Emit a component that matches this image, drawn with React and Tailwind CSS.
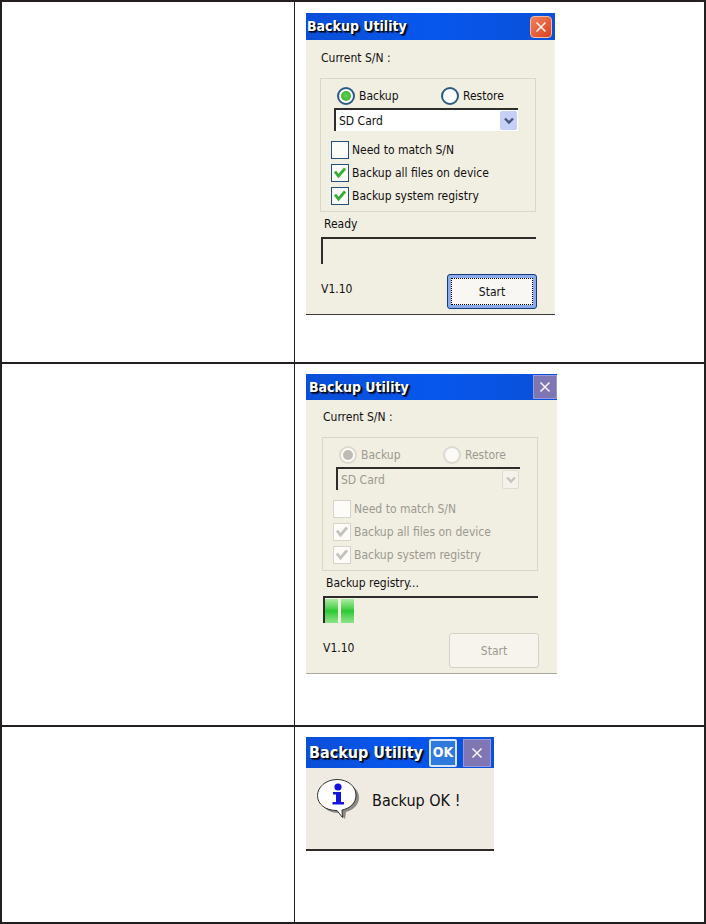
import { clsx } from "clsx";

function CloseButton({ active, className }) {
  return (
    <button
      type="button"
      aria-label="Close"
      className={clsx(
        "flex items-center justify-center border",
        active ? "rounded-sm border-[#f4b8a4] bg-linear-to-br from-[#f0805c] to-[#d8401c]" : "border-[#9a98dc] bg-[#7f76b4]",
        className
      )}
    >
      <svg viewBox="0 0 12 12" className="h-3 w-3" fill="none" stroke="#f6f0f4" strokeWidth="1.6">
        <path d="M1.5 1.5l9 9M10.5 1.5l-9 9" />
      </svg>
    </button>
  );
}

function TitleBar({ children, className }) {
  return (
    <div className={clsx("flex items-center bg-linear-to-r from-[#0a4fd6] via-[#0757ee] to-[#0a50d8]", className)}>
      <h2 className="flex-1 whitespace-nowrap font-bold text-white [text-shadow:1px_1px_1px_#000,2px_2px_1px_#001850]">
        Backup Utility
      </h2>
      {children}
    </div>
  );
}

function Radio({ label, disabled, ...props }) {
  return (
    <label className="flex items-center gap-1">
      <span className="relative h-[18px] w-[18px]">
        <input
          type="radio"
          disabled={disabled}
          className={clsx(
            "peer block h-[18px] w-[18px] appearance-none rounded-full border-2",
            disabled ? "border-[#dcdad0] bg-[#fbfaf6]" : "border-[#2c5a84] bg-white"
          )}
          {...props}
        />
        <span
          className={clsx(
            "pointer-events-none absolute inset-1 hidden rounded-full peer-checked:block",
            disabled ? "bg-[#bdbbb4]" : "bg-radial from-[#62d456] to-[#2fa82c]"
          )}
        />
      </span>
      {label}
    </label>
  );
}

function Check({ label, disabled, ...props }) {
  return (
    <label className="flex items-center gap-[3px]">
      <span className="relative h-[18px] w-[18px]">
        <input
          type="checkbox"
          disabled={disabled}
          className={clsx(
            "peer block h-[18px] w-[18px] appearance-none border",
            disabled ? "border-[#d6d4c8] bg-[#fdfcf8]" : "border-[#24507a] bg-[#fbfbf8]"
          )}
          {...props}
        />
        <svg
          viewBox="0 0 12 12"
          fill="none"
          strokeWidth="2.8"
          className={clsx(
            "pointer-events-none absolute inset-[3px] hidden h-3 w-3 peer-checked:block",
            disabled ? "stroke-[#c4c2ba]" : "stroke-[#35ac34]"
          )}
        >
          <path d="M1 4.5L4.5 9L11 1.5" />
        </svg>
      </span>
      {label}
    </label>
  );
}

function BackupDialog({ id, status, blocks = 0, busy, className }) {
  return (
    <section className={clsx("border-b bg-[#f1eee2] text-[#111]", busy ? "border-[#aaa89c]" : "border-[#3c3a36]", className)}>
      <TitleBar className={clsx("text-[14px]", busy ? "h-[26px] pl-[3px]" : "h-[27px] pl-px pr-[3px]")}>
        <CloseButton active={!busy} className={busy ? "h-6 w-6" : "h-[22px] w-[22px]"} />
      </TitleBar>
      <div className={clsx("pb-[5px] pr-[19px]", busy ? "pl-4 pt-[9px]" : "pl-[14px] pt-[10px]")}>
        <p className="pl-px leading-4">Current S/N :</p>
        <fieldset
          disabled={busy}
          className={clsx("mt-3 h-[134px] border border-[#dad7c8] pl-[10px] pr-[17px] pt-2", busy && "text-[#9c9a90]")}
        >
          <div className="grid grid-cols-[104px_1fr] pl-[6px]">
            <Radio label="Backup" name={`${id}-mode`} defaultChecked disabled={busy} />
            <Radio label="Restore" name={`${id}-mode`} disabled={busy} />
          </div>
          <div className="relative ml-[3px] mt-[3px]">
            <select
              aria-label="Backup location"
              className={clsx(
                "block h-[23px] w-full appearance-none border-l-2 border-t-2 border-[#2e2c2a] pl-[3px] leading-4 opacity-100",
                busy ? "bg-[#f1eee2]" : "bg-white"
              )}
            >
              <option>SD Card</option>
            </select>
            <span
              className={clsx(
                "pointer-events-none absolute bottom-px right-px top-[3px] flex w-[17px] items-center justify-center rounded-xs border",
                busy ? "border-[#dedbd0] bg-[#f4f2ea]" : "border-[#c4d0f4] bg-[#c6d0f6]"
              )}
            >
              <svg viewBox="0 0 10 8" className="h-2 w-[10px]" fill="none" stroke={busy ? "#c6c4bc" : "#45557e"} strokeWidth="2.4">
                <path d="M1 1.5l4 4l4-4" />
              </svg>
            </span>
          </div>
          <div className="mt-[10px] grid gap-[5px]">
            <Check label="Need to match S/N" disabled={busy} />
            <Check label="Backup all files on device" defaultChecked disabled={busy} />
            <Check label="Backup system registry" defaultChecked disabled={busy} />
          </div>
        </fieldset>
        <p className="mt-1 pl-1 leading-4">{status}</p>
        <div
          role="progressbar"
          aria-label={status}
          className="ml-px mt-[5px] flex h-[27px] gap-[3px] border-l-2 border-t-2 border-[#2e2c2a] pt-px"
        >
          {Array.from({ length: blocks }, (_, i) => (
            <span key={i} className="w-[13px] bg-linear-to-b from-[#a8eca0] via-[#22c832] to-[#8ce488]" />
          ))}
        </div>
        <div className="mt-[10px] flex items-start justify-between pl-px">
          <span className="pt-[7px] leading-4">V1.10</span>
          <button
            type="button"
            disabled={busy}
            className={clsx(
              "-mr-px h-[35px] w-[90px] rounded-[3px] border p-[3px]",
              busy ? "border-[#d4d2c6] bg-[#f6f4ec] text-[#9c9a90]" : "border-[#123c7c] bg-[#8cabea]"
            )}
          >
            <span
              className={clsx(
                "flex h-full items-center justify-center border border-dotted",
                busy ? "border-transparent" : "border-black bg-[#f8f7f3]"
              )}
            >
              Start
            </span>
          </button>
        </div>
      </div>
    </section>
  );
}

function MessageDialog() {
  return (
    <section className="w-[188px] border-b-2 border-[#2e2c2a] bg-[#f0ebe2] text-[#111]">
      <TitleBar className="h-[31px] pl-[3px] pr-[3px] text-[16px]">
        <button
          type="button"
          className="mr-[6px] flex h-7 w-7 items-center justify-center rounded-xs border-2 border-[#d6e6ff] bg-[#2f78dc] text-[14px] font-bold text-white"
        >
          OK
        </button>
        <CloseButton className="h-7 w-7" />
      </TitleBar>
      <div className="flex h-[81px] items-start gap-3 pl-[10px] pt-[10px]">
        <svg viewBox="0 0 44 44" className="h-11 w-11">
          <path
            d="M24 4.500c11 0 19 7 19 15 0 7-5 12-13 14.500l-1 7-6-6C12 35 5 29 5 20.500 5 11.500 13 4.500 24 4.500z"
            fill="#8b8980"
          />
          <path
            d="M21 1.500c11 0 19 7 19 15.500 0 8-6 13.500-14 15l.5 7.500-5.500-7C9 32.500 1.500 26 1.500 17.500S10 1.500 21 1.500z"
            fill="#fff"
            stroke="#333"
          />
          <circle cx="22" cy="9" r="3.600" fill="#1414e0" />
          <path d="M17 14h8v10h3v2.500H16.500v-2.500H20v-7.500h-3z" fill="#1414e0" />
        </svg>
        <p className="pt-[11px] text-[16px] leading-6">Backup OK !</p>
      </div>
    </section>
  );
}

function Row({ children, className }) {
  return (
    <div className={clsx("grid grid-cols-[293px_1fr] border-b-2 border-[#231f20]", className)}>
      <div className="border-r border-[#231f20]" />
      <div className="pl-[11px]">{children}</div>
    </div>
  );
}

export default function App() {
  return (
    <main className="border-x-2 border-t-2 border-[#231f20] bg-white font-['DejaVu_Sans_Condensed','DejaVu_Sans',sans-serif] text-[12px]">
      <Row className="min-h-[362px] [&>div+div]:pt-[11px]">
        <BackupDialog id="ready" status="Ready" className="w-[249px]" />
      </Row>
      <Row className="min-h-[363px] [&>div+div]:pt-[10px]">
        <BackupDialog id="running" status="Backup registry..." blocks={2} busy className="w-[251px]" />
      </Row>
      <Row className="min-h-[197px] [&>div+div]:pt-[10px]">
        <MessageDialog />
      </Row>
    </main>
  );
}
